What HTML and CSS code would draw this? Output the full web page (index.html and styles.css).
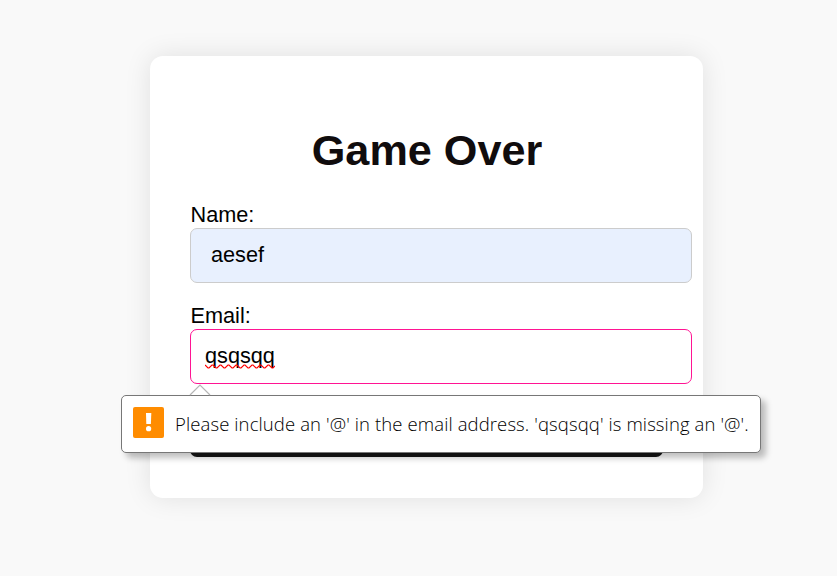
FILE: index.html
```html
<!DOCTYPE html>
<html lang="en">
<head>
<meta charset="utf-8">
<title>Game Over</title>
<link rel="stylesheet" href="styles.css">
</head>
<body>
<main class="card">
  <h1 class="title">Game Over</h1>
  <form class="form">
    <label class="label" for="name">Name:</label>
    <div class="field field-filled" id="name">aesef</div>
    <label class="label" for="email">Email:</label>
    <div class="field field-invalid" id="email">
      <span class="misspelled">qsqsqq<svg class="squiggle" width="70" height="5" viewBox="0 0 70 5"><path d="M0 1L3 4H4L7 1H8L11 4H12L15 1H16L19 4H20L23 1H24L27 4H28L31 1H32L35 4H36L39 1H40L43 4H44L47 1H48L51 4H52L55 1H56L59 4H60L63 1H64L67 4H68L70 2" fill="none" stroke="#f00" stroke-width="1.2"/></svg></span>
      <div class="tooltip" role="alert">
        <svg class="pointer" width="22" height="12" viewBox="0 0 22 12"><path d="M1 11L11 1L21 11" fill="#fff" stroke="#b5b5b5" stroke-width="1.2"/></svg>
        <svg class="warning" width="31" height="31" viewBox="0 0 31 31"><rect width="31" height="31" rx="2" fill="#ff8c00"/><path d="M13 6H18.300L17.900 17H13.300Z" fill="#fff"/><circle cx="15.600" cy="21.700" r="2.600" fill="#fff"/></svg>
        <span class="message">Please include an '@' in the email address. 'qsqsqq' is missing an '@'.</span>
      </div>
    </div>
    <button class="submit" type="button" aria-label="Submit"></button>
  </form>
</main>
</body>
</html>
```
FILE: styles.css
```css
* {
  box-sizing: border-box;
}

body {
  margin: 0;
  height: 576px;
  overflow: hidden;
  background: #f9f9f9;
  color: #000;
  font: 21.7px/26px "Liberation Sans", Arial, sans-serif;
}

.card {
  width: 553px;
  height: 442px;
  margin: 56px 0 0 150px;
  padding: 68px 40px 40px;
  border-radius: 13px;
  background: #fff;
  box-shadow: 0 0 27px rgba(0, 0, 0, 0.1);
}

.title {
  margin: 0 0 26px;
  padding-left: 1px;
  color: #100c0d;
  font-size: 43.2px;
  line-height: 52px;
  text-align: center;
  white-space: nowrap;
}

.form {
  display: flex;
  flex-direction: column;
}

.label {
  height: 26px;
  padding-left: 0.5px;
}

.field {
  position: relative;
  display: flex;
  align-items: center;
  width: 502px;
  height: 55px;
  margin-bottom: 20px;
  padding: 0 14px 2px;
  border: 1px solid #ccc;
  border-radius: 7px;
  background: #fff;
}

.field-filled {
  padding-left: 20px;
  background: #e8f0fe;
}

.field-invalid {
  margin-bottom: 19px;
  border-color: #ff1493;
}

.misspelled {
  position: relative;
}

.squiggle {
  position: absolute;
  left: 0;
  top: 21px;
}

.submit {
  width: 473px;
  height: 54px;
  padding: 0;
  border: 0;
  border-radius: 7px;
  background: #161616;
}

.tooltip {
  position: absolute;
  z-index: 2;
  left: -70px;
  top: 65px;
  display: flex;
  align-items: center;
  gap: 11px;
  width: 640px;
  height: 58px;
  padding: 0 11px;
  border: 1px solid #777;
  border-radius: 5px;
  background: #fff;
  box-shadow: 5px 5px 6px rgba(0, 0, 0, 0.25);
}

.pointer {
  position: absolute;
  left: 67px;
  top: -12px;
}

.warning {
  flex: none;
  margin-bottom: 3px;
}

.message {
  color: #000;
  font: 350 18.5px/26px "Open Sans", "Noto Sans", sans-serif;
  letter-spacing: 0.11px;
  white-space: nowrap;
}
```
